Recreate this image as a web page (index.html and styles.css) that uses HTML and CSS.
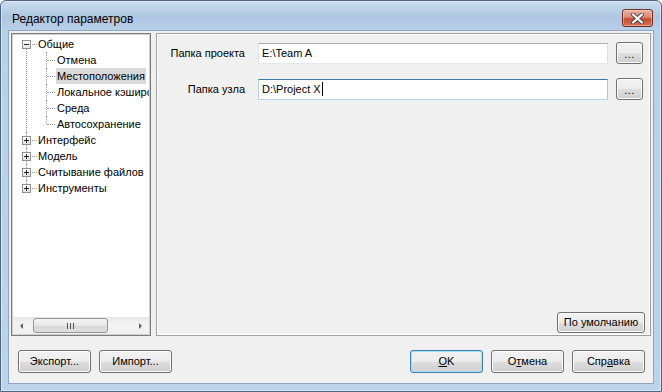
FILE: index.html
```html
<!DOCTYPE html>
<html lang="ru">
<head>
  <meta charset="UTF-8" />
  <title>Редактор параметров</title>
  <link rel="stylesheet" href="styles.css">
</head>
<body>

<div class="window">
  <div class="titlebar">
    <span class="title">Редактор параметров</span>
    <button class="close" aria-label="Закрыть">
      <svg width="13" height="11" viewBox="0 0 13 11">
        <path d="M2 1.5 L11 9.5 M11 1.5 L2 9.5" stroke="#4a4a4a" stroke-width="4" stroke-linecap="round"/>
        <path d="M2 1.5 L11 9.5 M11 1.5 L2 9.5" stroke="#fff" stroke-width="2.2" stroke-linecap="round"/>
      </svg>
    </button>
  </div>

  <div class="client">
    <div class="panes">
      <div class="tree-box">
        <ul class="tree">
          <li class="node">
            <div class="row">
              <svg class="exp" width="9" height="9" viewBox="0 0 9 9"><rect x="0.5" y="0.5" width="8" height="8" fill="url(#expfill)" stroke="#919191"/><path d="M2 4.5 H7" stroke="#222"/></svg>
              <span class="tick"></span><span class="label">Общие</span>
            </div>
            <ul class="children">
              <li><div class="row"><span class="tick"></span><span class="label">Отмена</span></div></li>
              <li><div class="row"><span class="tick"></span><span class="label sel">Местоположения</span></div></li>
              <li><div class="row"><span class="tick"></span><span class="label">Локальное кэширование</span></div></li>
              <li><div class="row"><span class="tick"></span><span class="label">Среда</span></div></li>
              <li><div class="row"><span class="tick"></span><span class="label">Автосохранение</span></div></li>
            </ul>
          </li>
          <li class="node">
            <div class="row">
              <svg class="exp" width="9" height="9" viewBox="0 0 9 9"><rect x="0.5" y="0.5" width="8" height="8" fill="url(#expfill)" stroke="#919191"/><path d="M2 4.5 H7 M4.5 2 V7" stroke="#222"/></svg>
              <span class="tick"></span><span class="label">Интерфейс</span>
            </div>
          </li>
          <li class="node">
            <div class="row">
              <svg class="exp" width="9" height="9" viewBox="0 0 9 9"><rect x="0.5" y="0.5" width="8" height="8" fill="url(#expfill)" stroke="#919191"/><path d="M2 4.5 H7 M4.5 2 V7" stroke="#222"/></svg>
              <span class="tick"></span><span class="label">Модель</span>
            </div>
          </li>
          <li class="node">
            <div class="row">
              <svg class="exp" width="9" height="9" viewBox="0 0 9 9"><rect x="0.5" y="0.5" width="8" height="8" fill="url(#expfill)" stroke="#919191"/><path d="M2 4.5 H7 M4.5 2 V7" stroke="#222"/></svg>
              <span class="tick"></span><span class="label">Считывание файлов</span>
            </div>
          </li>
          <li class="node">
            <div class="row">
              <svg class="exp" width="9" height="9" viewBox="0 0 9 9"><rect x="0.5" y="0.5" width="8" height="8" fill="url(#expfill)" stroke="#919191"/><path d="M2 4.5 H7 M4.5 2 V7" stroke="#222"/></svg>
              <span class="tick"></span><span class="label">Инструменты</span>
            </div>
          </li>
        </ul>
        <div class="hscroll">
          <span class="arrow left"></span>
          <span class="thumb"><span class="grip"></span></span>
          <span class="arrow right"></span>
        </div>
      </div>

      <div class="settings">
        <div class="field">
          <span class="field-label">Папка проекта</span>
          <div class="input">E:\Team A</div>
          <button class="btn browse">...</button>
        </div>
        <div class="field">
          <span class="field-label">Папка узла</span>
          <div class="input focused">D:\Project X<span class="caret"></span></div>
          <button class="btn browse">...</button>
        </div>
        <div class="defaults-row">
          <button class="btn defaults">По умолчанию</button>
        </div>
      </div>
    </div>

    <div class="footer">
      <button class="btn">Экспорт...</button>
      <button class="btn">Импорт...</button>
      <button class="btn default push"><u>O</u>K</button>
      <button class="btn">О<u>т</u>мена</button>
      <button class="btn">Спр<u>а</u>вка</button>
    </div>
  </div>
</div>

<svg width="0" height="0" class="defs">
  <defs>
    <linearGradient id="expfill" x1="0" y1="0" x2="0" y2="1">
      <stop offset="0" stop-color="#ffffff"/>
      <stop offset="1" stop-color="#e0e0e0"/>
    </linearGradient>
  </defs>
</svg>

</body>
</html>
```

FILE: styles.css
```css
* {
  box-sizing: border-box;
}
html, body {
  margin: 0;
  padding: 0;
  background: #fff;
}
body {
  width: 662px;
  height: 392px;
  overflow: hidden;
  font-family: "Liberation Sans", Arial, sans-serif;
  font-size: 11px;
  color: #000;
}

.defs {
  position: absolute;
}

/* Окно */
.window {
  width: 662px;
  height: 392px;
  border: 1px solid #4d6482;
  border-radius: 6px 6px 0 0;
  background: linear-gradient(#cbdcef 0px, #aec6e1 16px, #b9d0e9 30px, #bdd3eb 100%);
  box-shadow: inset 0 0 0 1px rgba(255,255,255,0.45);
  display: flex;
  flex-direction: column;
}

.titlebar {
  height: 29px;
  display: flex;
  align-items: flex-start;
  padding: 0 8px 0 11px;
}
.title {
  margin-top: 11px;
  line-height: 14px;
  font-size: 12px;
  color: #000;
}
.close {
  margin-left: auto;
  margin-top: 8px;
  width: 31px;
  height: 18px;
  border: 1px solid #6f2c21;
  border-radius: 3px;
  background: linear-gradient(#eab0a2 0%, #d98a77 45%, #c54c33 55%, #d66f55 100%);
  box-shadow: inset 0 0 0 1px rgba(255,255,255,0.35);
  padding: 0;
  display: flex;
  align-items: center;
  justify-content: center;
}

.client {
  flex: 1;
  margin: 0 7px 7px 7px;
  background: #f0f0f0;
  border: 1px solid #8ea6c4;
  display: flex;
  flex-direction: column;
  padding: 2px 2px 0 2px;
}

.panes {
  display: flex;
  gap: 5px;
  height: 303px;
}

/* Дерево */
.tree-box {
  width: 140px;
  border: 1px solid #7c7c7c;
  box-shadow: inset 0 0 0 1px #cfcfcf;
  padding: 1px;
  background: #fff;
  display: flex;
  flex-direction: column;
  overflow: hidden;
}

.tree {
  flex: 1;
  list-style: none;
  margin: 0;
  padding: 1px 0 0 0;
  overflow: hidden;
}
.tree ul {
  list-style: none;
  margin: 0;
  padding: 0;
}
.tree li {
  position: relative;
}

.node::before {
  content: '';
  position: absolute;
  left: 13px;
  top: 0;
  bottom: 0;
  border-left: 1px dotted #a0a0a0;
}
.node:first-child::before {
  top: 8px;
}
.node:last-child::before {
  bottom: auto;
  height: 8px;
}

.children li::before {
  content: '';
  position: absolute;
  left: 33px;
  top: 0;
  bottom: 0;
  border-left: 1px dotted #a0a0a0;
}
.children li:last-child::before {
  bottom: auto;
  height: 8px;
}

.row {
  height: 16px;
  display: flex;
  align-items: center;
  white-space: nowrap;
  padding-left: 9px;
}
.children .row {
  padding-left: 34px;
}

.exp {
  position: relative;
  z-index: 1;
  flex: none;
}
.tick {
  width: 5px;
  height: 0;
  border-top: 1px dotted #a0a0a0;
  margin-left: 1px;
  flex: none;
}
.children .tick {
  width: 8px;
  margin-left: 0;
  margin-right: 1px;
}
.label {
  padding: 0 1px;
  line-height: 15px;
  padding-top: 1px;
}
.label.sel {
  background: #d9d9d9;
}

/* Горизонтальная прокрутка */
.hscroll {
  height: 17px;
  flex: none;
  display: flex;
  align-items: center;
  background: linear-gradient(#e6e6e6, #f3f3f3 40%, #f0f0f0);
}
.arrow {
  width: 17px;
  height: 17px;
  display: flex;
  align-items: center;
  justify-content: center;
}
.arrow::before {
  content: '';
  border-top: 3px solid transparent;
  border-bottom: 3px solid transparent;
}
.arrow.left::before {
  border-right: 3px solid #606060;
}
.arrow.right {
  margin-left: auto;
}
.arrow.right::before {
  border-left: 3px solid #606060;
}
.thumb {
  margin-left: 3px;
  width: 75px;
  height: 15px;
  border: 1px solid #979797;
  border-radius: 3px;
  background: linear-gradient(#f4f4f4, #e8e8e8 50%, #d8d8d8 51%, #dedede);
  display: flex;
  align-items: center;
  justify-content: center;
}
.grip {
  width: 7px;
  height: 6px;
  background: repeating-linear-gradient(90deg, #555 0 1px, transparent 1px 3px);
}

/* Правая панель */
.settings {
  flex: 1;
  border: 1px solid #a0a0a0;
  box-shadow: inset 0 0 0 1px #fff;
  padding: 8px 5px 2px 1px;
  display: flex;
  flex-direction: column;
  gap: 14px;
}

.field {
  display: flex;
  align-items: center;
  height: 22px;
  padding-right: 2px;
}
.field-label {
  width: 87px;
  text-align: right;
  margin-right: 13px;
  flex: none;
}
.input {
  flex: 1;
  height: 21px;
  background: #fff;
  border: 1px solid;
  border-color: #abadb3 #dbdfe6 #e3e9ef #e2e3ea;
  padding-left: 3px;
  line-height: 19px;
  margin-right: 8px;
  white-space: nowrap;
}
.input.focused {
  border-color: #3d7bad #a4c9e3 #b7d9ed #b5cfe7;
}
.caret {
  display: inline-block;
  width: 1px;
  height: 14px;
  background: #000;
  vertical-align: -3px;
  margin-left: 1px;
}

.defaults-row {
  margin-top: auto;
  display: flex;
  justify-content: flex-end;
}

/* Кнопки */
.btn {
  height: 23px;
  width: 73px;
  border: 1px solid #707070;
  border-radius: 3px;
  background: linear-gradient(#f2f2f2 0%, #ebebeb 50%, #dddddd 51%, #cfcfcf 100%);
  box-shadow: inset 0 0 0 1px #fcfcfc;
  font-family: "Liberation Sans", Arial, sans-serif;
  font-size: 11px;
  color: #000;
  padding: 0;
  line-height: 19px;
}
.btn u {
  text-underline-offset: 1px;
}
.browse {
  width: 27px;
  height: 22px;
  line-height: 22px;
  letter-spacing: 0.5px;
}
.defaults {
  width: 88px;
  height: 21px;
}
.default {
  border-color: #3c7fb1;
  box-shadow: inset 0 0 0 1px #a6e0f7;
}

.footer {
  display: flex;
  gap: 8px;
  padding: 14px 6px 0 7px;
}
.push {
  margin-left: auto;
}
```
